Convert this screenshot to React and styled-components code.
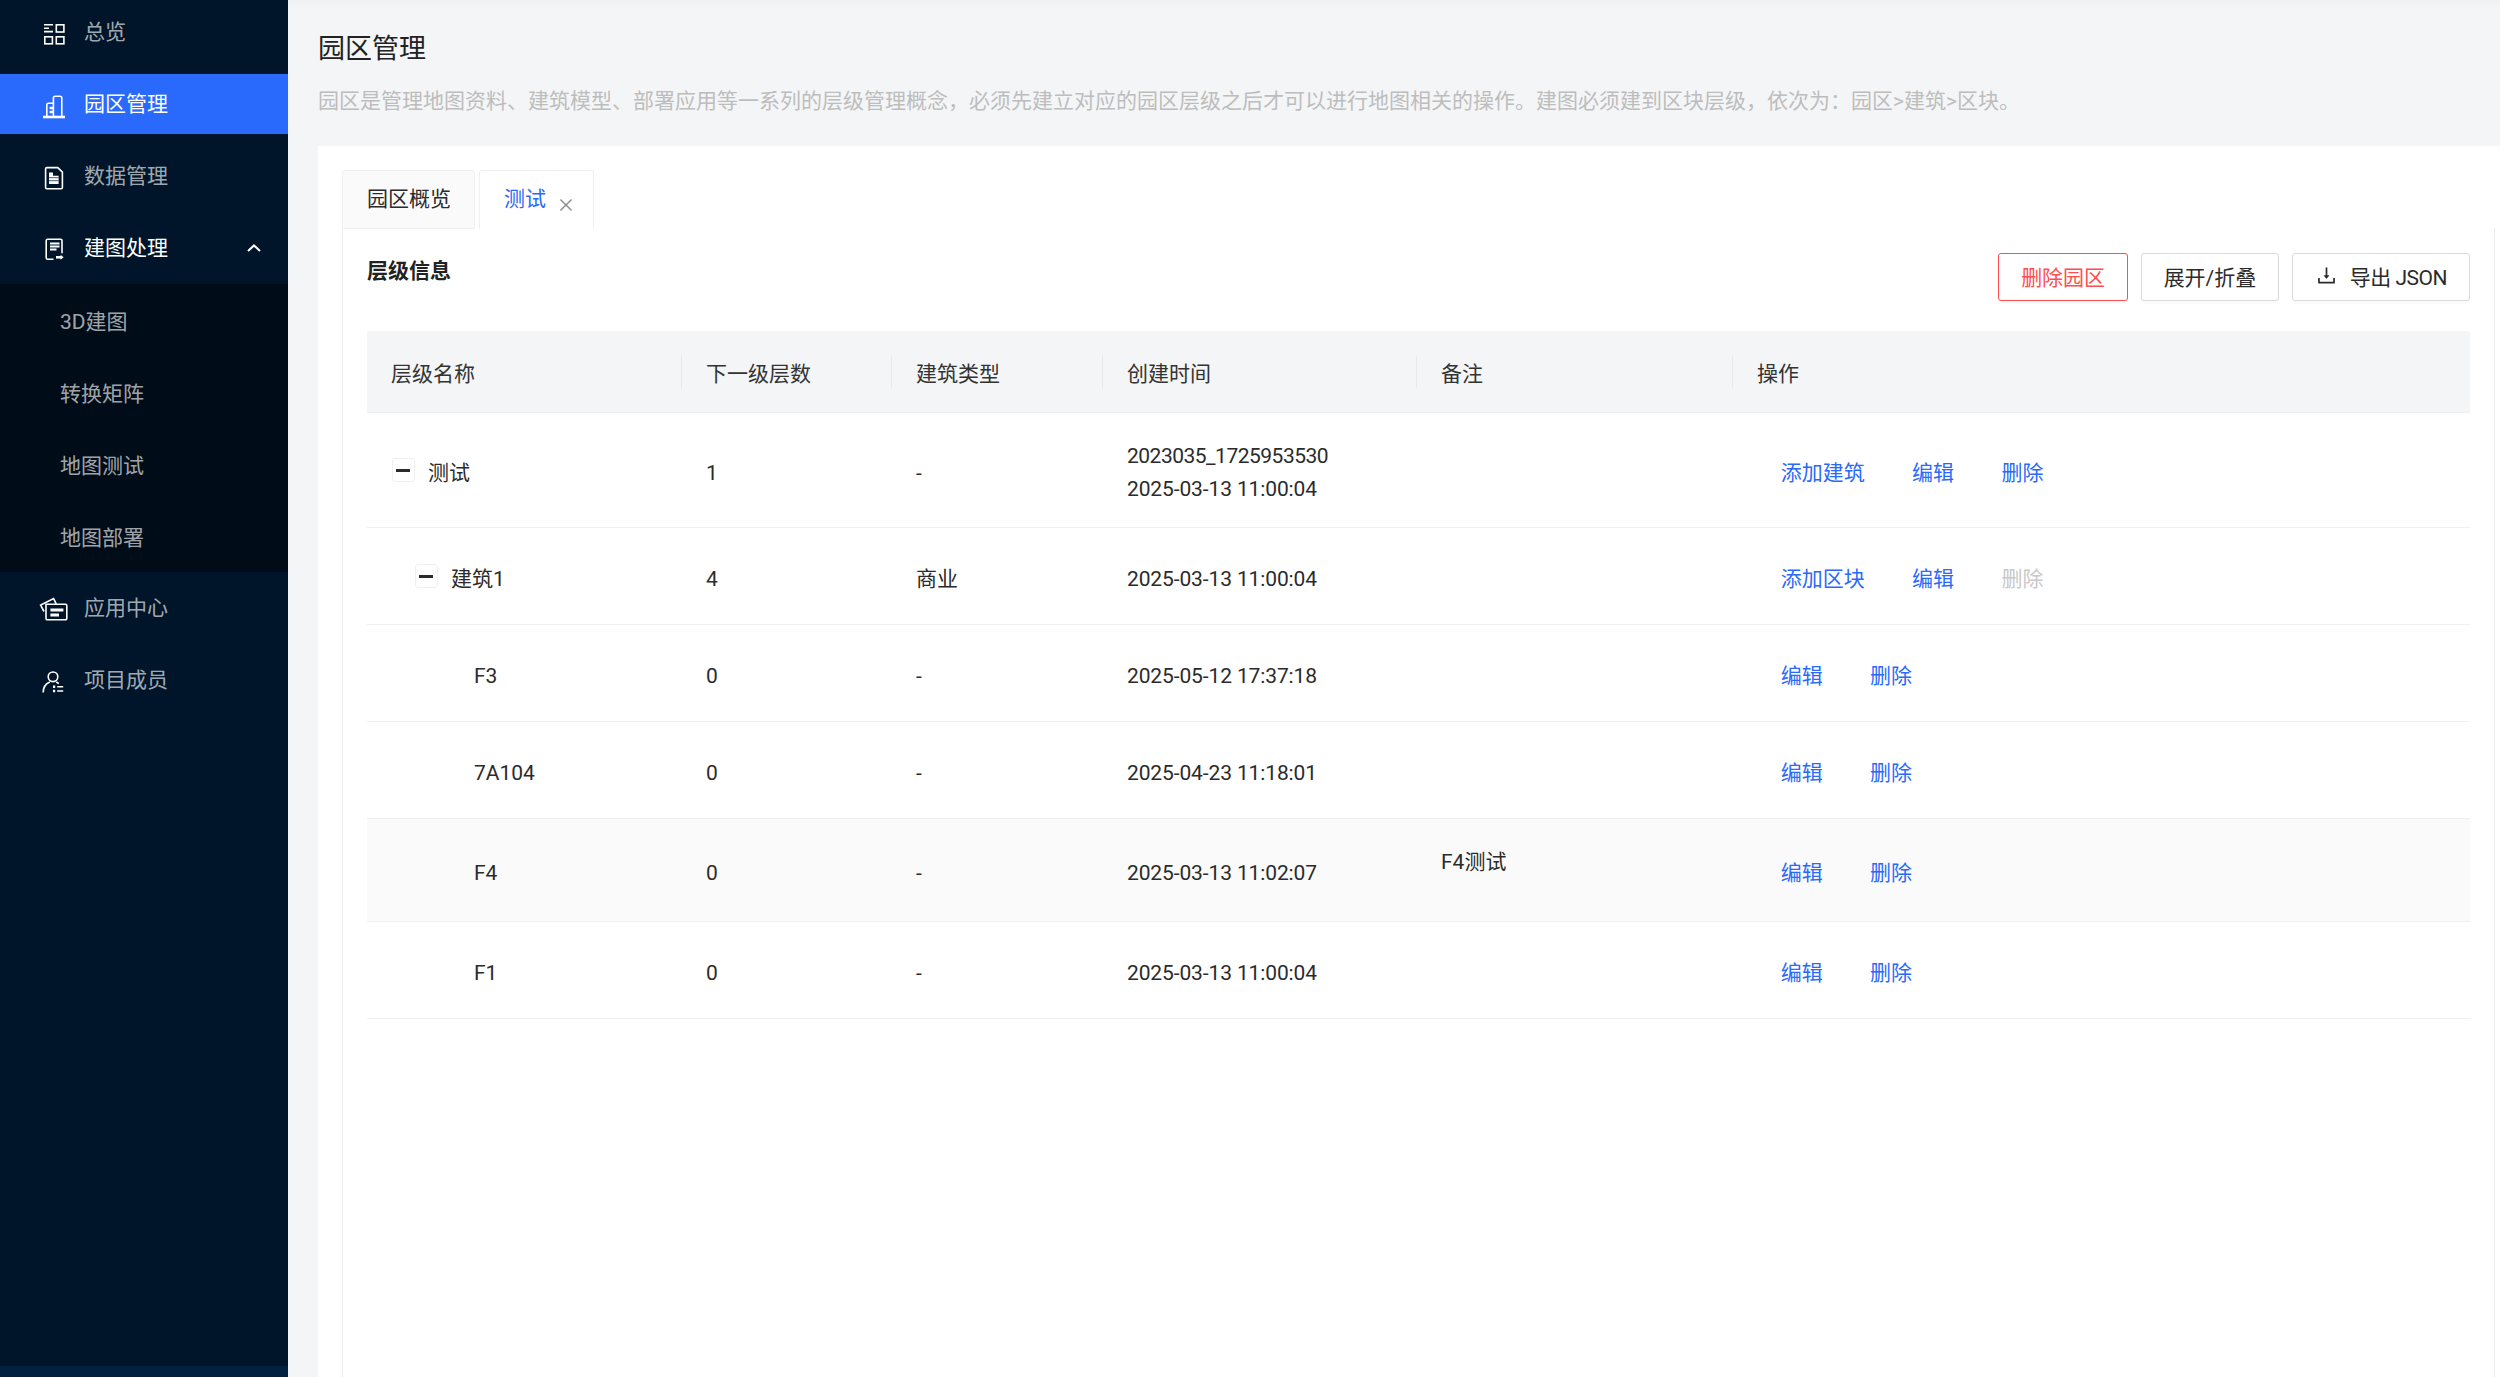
import React from 'react';
import styled, { createGlobalStyle } from 'styled-components';
import { AiOutlineDownload, AiOutlineClose } from 'react-icons/ai';

const GlobalStyle = createGlobalStyle`
  html, body {
    margin: 0;
    height: 100%;
    overflow: hidden;
  }
  body {
    font-family: Roboto, "Noto Sans CJK SC", sans-serif;
    font-size: 21px;
    line-height: 33px;
    color: #2b2b2b;
  }
  * {
    box-sizing: border-box;
  }
`;

const Layout = styled.div`
  display: flex;
  height: 1377px;
  overflow: hidden;
`;

const Sidebar = styled.aside`
  width: 288px;
  flex: none;
  display: flex;
  flex-direction: column;
  background: #001529;
`;

const Menu = styled.nav`
  flex: 1;
  display: flex;
  flex-direction: column;
  margin-top: -4px;
`;

const MenuItem = styled.div`
  height: 60px;
  margin: 6px 0;
  padding: 0 27px 0 42px;
  display: flex;
  align-items: center;
  gap: 18px;
  flex: none;
  color: ${(p) => (p.$active || p.$open ? '#fff' : 'rgba(255, 255, 255, 0.65)')};
  background: ${(p) => (p.$active ? '#2969fb' : 'transparent')};
`;

const MenuLabel = styled.span`
  flex: 1;
`;

const SubMenu = styled.div`
  background: #000c17;
  display: flex;
  flex-direction: column;
`;

const SubItem = styled.div`
  height: 60px;
  margin: 6px 0;
  padding: 4px 0 0 60px;
  display: flex;
  align-items: center;
  color: rgba(255, 255, 255, 0.65);
`;

const Trigger = styled.div`
  height: 11px;
  flex: none;
  background: #002140;
`;

const MenuIcon = styled.svg`
  width: 24px;
  height: 24px;
  flex: none;
  overflow: visible;
  fill: none;
  stroke: #fff;
  stroke-width: 1.6;
`;

const Main = styled.main`
  flex: 1;
  min-width: 0;
  display: flex;
  flex-direction: column;
  background: linear-gradient(#eff0f2, #f4f5f7 9px);
`;

const PageHead = styled.header`
  padding: 33px 30px 30px;
  height: 146px;
`;

const PageTitle = styled.h1`
  margin: 0;
  font-size: 27px;
  line-height: 33px;
  font-weight: 400;
  color: #222;
`;

const PageDesc = styled.p`
  margin: 19px 0 0;
  color: #bdbdbd;
  white-space: nowrap;
`;

const Panel = styled.section`
  flex: 1;
  min-height: 0;
  margin-left: 30px;
  padding: 24px 5px 0 24px;
  background: #fff;
  display: flex;
  flex-direction: column;
`;

const TabBar = styled.div`
  display: flex;
  gap: 4px;
  height: 59px;
  margin-bottom: -1px;
  position: relative;
  z-index: 1;
`;

const Tab = styled.div`
  height: 59px;
  padding: 8px ${(p) => (p.$active ? '18px' : '23px')} 0 24px;
  display: flex;
  align-items: flex-start;
  border: 1px solid #f0f0f0;
  border-bottom-color: ${(p) => (p.$active ? '#fff' : '#f0f0f0')};
  border-radius: 3px 3px 0 0;
  background: ${(p) => (p.$active ? '#fff' : '#fafafa')};
  color: ${(p) => (p.$active ? '#2969fb' : '#2b2b2b')};
  line-height: 41px;
`;

const TabClose = styled(AiOutlineClose)`
  width: 18px;
  height: 18px;
  margin: 17px 0 0 11px;
  color: #8c8c8c;
`;

const Card = styled.div`
  flex: 1;
  border-left: 1px solid #ececec;
  border-right: 1px solid #ececec;
  padding: 25px 24px 0 24px;
`;

const Toolbar = styled.div`
  display: flex;
  justify-content: space-between;
  align-items: flex-start;
  margin-bottom: 30px;
`;

const SectionTitle = styled.h2`
  margin: 0;
  padding-top: 2px;
  font-size: 21px;
  line-height: 33px;
  font-weight: 700;
  color: #222;
`;

const Actions = styled.div`
  display: flex;
  gap: 12.5px;
`;

const Button = styled.button`
  height: 48px;
  padding: 3px 22px 0;
  display: flex;
  align-items: center;
  gap: 12px;
  font: inherit;
  background: #fff;
  border: 1.5px solid ${(p) => (p.$danger ? '#ff4d4f' : '#d9d9d9')};
  border-radius: 3px;
  color: ${(p) => (p.$danger ? '#ff4d4f' : '#2b2b2b')};
  box-shadow: 0 3px 0 rgba(0, 0, 0, 0.015);
  white-space: nowrap;
`;

const ExportIcon = styled(AiOutlineDownload)`
  width: 23px;
  height: 23px;
  margin-top: -6px;
`;

const ExportLabel = styled.span`
  letter-spacing: -0.5px;
`;

const Table = styled.table`
  width: 2103px;
  table-layout: fixed;
  border-collapse: separate;
  border-spacing: 0;
`;

const Col = styled.col`
  width: ${(p) => p.$w}px;
`;

const Th = styled.th`
  height: 82px;
  padding: 5px 24px 0;
  position: relative;
  text-align: left;
  font-weight: 400;
  color: #333;
  background: #f4f5f7;
  border-bottom: 1px solid #f0f0f0;

  &:first-child {
    border-top-left-radius: 3px;
  }

  &:last-child {
    border-top-right-radius: 3px;
  }

  &:not(:last-child)::before {
    content: '';
    position: absolute;
    top: 50%;
    right: 0;
    width: 1.5px;
    height: 33px;
    transform: translateY(-50%);
    background: #e9eaec;
  }
`;

const Td = styled.td`
  padding: 27px 24px 21px;
  vertical-align: middle;
  border-bottom: 1.5px solid #f0f0f0;
  background: ${(p) => (p.$hover ? '#fafafa' : '#fff')};
`;

const NameCell = styled.div`
  display: flex;
  align-items: center;
  gap: 13px;
  padding-left: ${(p) => p.$level * 23}px;
`;

const ExpandBox = styled.span`
  width: 23.5px;
  height: 23.5px;
  margin: 0 0 6px 0.5px;
  flex: none;
  display: flex;
  align-items: center;
  justify-content: center;
  border: 1px solid #f0f0f0;
  border-radius: 3px;
  background: #fff;

  &::after {
    content: '';
    width: 14px;
    height: 3px;
    background: #2b2b2b;
  }
`;

const ExpandSpace = styled.span`
  width: 24px;
  flex: none;
`;

const DateLine = styled.div`
  white-space: nowrap;
  letter-spacing: ${(p) => (p.$id ? '-0.5px' : '-0.12px')};
`;

const Note = styled.pre`
  margin: 0 0 21px;
  font: inherit;
`;

const OpCell = styled.div`
  display: flex;
`;

const LinkButton = styled.span`
  height: 48px;
  padding: 0 23.7px;
  display: flex;
  align-items: center;
  white-space: nowrap;
  color: ${(p) => (p.$disabled ? '#c8c8c8' : '#2969fb')};
`;

const ChevronIcon = styled.svg`
  width: 14px;
  height: 8px;
  fill: none;
  stroke: #fff;
  stroke-width: 2;
`;

const IconOverview = () => (
  <MenuIcon viewBox="0 0 24 24">
    <path d="M2 4.8h9M2 8.2h5M2 11.6h9" />
    <rect x="14.3" y="4.8" width="7.6" height="7.2" />
    <rect x="2.8" y="16.8" width="7.6" height="7" />
    <rect x="14.3" y="16.8" width="7.6" height="7" />
  </MenuIcon>
);

const IconPark = () => (
  <MenuIcon viewBox="0 0 24 24">
    <path d="M4.8 24V12.8q0-1.6 1.6-1.6h5V6q0-1.8 1.8-1.8h4.8q1.8 0 1.8 1.8v18" />
    <path d="M11.4 11.2V24" />
    <path d="M1 25h22" strokeWidth="2.6" />
    <path d="M7.6 16h4.4M7.6 20h4.4" strokeWidth="2.4" />
  </MenuIcon>
);

const IconData = () => (
  <MenuIcon viewBox="0 0 24 24">
    <path d="M4.8 3.6h11l4.6 4.6v15.4q0 1.2-1.2 1.2H4.8q-1.2 0-1.2-1.2V4.8q0-1.2 1.2-1.2z" />
    <path d="M7 8.5h4v3.2h5.6V20H7z" fill="#fff" stroke="none" />
    <path d="M7 13.7h9.6M7 16.7h9.6" stroke="#001529" strokeWidth="0.7" />
  </MenuIcon>
);

const IconBuild = () => (
  <MenuIcon viewBox="0 0 24 24">
    <path d="M11.5 23.2H5.6q-1.4 0-1.4-1.4V4.6q0-1.4 1.4-1.4h13q1.4 0 1.4 1.4v12.6" />
    <path d="M8 7.5h9.5M8 10.5h9.5M8 13.5h6.5" strokeWidth="2" />
    <path d="M14 21.3h5.5" strokeWidth="2.6" />
    <path d="M18.6 18.8l3 2.5-3 2.5z" fill="#fff" stroke="none" />
  </MenuIcon>
);

const IconApp = () => (
  <MenuIcon viewBox="0 0 24 24">
    <path d="M2 15.5l-3.4-6.4L11.6 2.6l2.6 5.2" />
    <path d="M4.6 8.2h18.8q1.4 0 1.4 1.4v12.8q0 1.4-1.4 1.4H5.4q-1.4 0-1.4-1.4V8.2z" />
    <path d="M8.4 14h13M8.4 19h8.6" strokeWidth="2.8" />
  </MenuIcon>
);

const IconMember = () => (
  <MenuIcon viewBox="0 0 24 24">
    <circle cx="11" cy="8.8" r="4.8" />
    <path d="M1.2 24.4q0-7.6 6.6-10.4M14.2 14q1.4.6 2.6 1.6" />
    <path d="M11 18.8h2.2M11 23h2.2" strokeWidth="2.4" />
    <path d="M15.2 18.8h6M15.2 23h6" strokeWidth="1.6" />
  </MenuIcon>
);

const menuTop = [
  { label: '总览', icon: <IconOverview /> },
  { label: '园区管理', icon: <IconPark />, active: true },
  { label: '数据管理', icon: <IconData /> },
];

const subItems = ['3D建图', '转换矩阵', '地图测试', '地图部署'];

const menuBottom = [
  { label: '应用中心', icon: <IconApp /> },
  { label: '项目成员', icon: <IconMember /> },
];

const columns = [
  { title: '层级名称', w: 315 },
  { title: '下一级层数', w: 210 },
  { title: '建筑类型', w: 211 },
  { title: '创建时间', w: 314 },
  { title: '备注', w: 316 },
  { title: '操作', w: 737 },
];

const rows = [
  {
    name: '测试',
    level: 0,
    expand: true,
    count: '1',
    type: '-',
    id: '2023035_1725953530',
    date: '2025-03-13 11:00:04',
    ops: [{ t: '添加建筑' }, { t: '编辑' }, { t: '删除' }],
  },
  {
    name: '建筑1',
    level: 1,
    expand: true,
    count: '4',
    type: '商业',
    date: '2025-03-13 11:00:04',
    ops: [{ t: '添加区块' }, { t: '编辑' }, { t: '删除', disabled: true }],
  },
  { name: 'F3', level: 2, count: '0', type: '-', date: '2025-05-12 17:37:18', ops: [{ t: '编辑' }, { t: '删除' }] },
  { name: '7A104', level: 2, count: '0', type: '-', date: '2025-04-23 11:18:01', ops: [{ t: '编辑' }, { t: '删除' }] },
  {
    name: 'F4',
    level: 2,
    count: '0',
    type: '-',
    date: '2025-03-13 11:02:07',
    note: 'F4测试',
    hover: true,
    ops: [{ t: '编辑' }, { t: '删除' }],
  },
  { name: 'F1', level: 2, count: '0', type: '-', date: '2025-03-13 11:00:04', ops: [{ t: '编辑' }, { t: '删除' }] },
];

const App = () => {
  return (
    <Layout>
      <GlobalStyle />
      <Sidebar>
        <Menu>
          {menuTop.map((m) => (
            <MenuItem key={m.label} $active={m.active}>
              {m.icon}
              <MenuLabel>{m.label}</MenuLabel>
            </MenuItem>
          ))}
          <MenuItem $open>
            <IconBuild />
            <MenuLabel>建图处理</MenuLabel>
            <ChevronIcon viewBox="0 0 14 8">
              <path d="M1 7l6-5.6L13 7" />
            </ChevronIcon>
          </MenuItem>
          <SubMenu>
            {subItems.map((s) => (
              <SubItem key={s}>{s}</SubItem>
            ))}
          </SubMenu>
          {menuBottom.map((m) => (
            <MenuItem key={m.label}>
              {m.icon}
              <MenuLabel>{m.label}</MenuLabel>
            </MenuItem>
          ))}
        </Menu>
        <Trigger />
      </Sidebar>

      <Main>
        <PageHead>
          <PageTitle>园区管理</PageTitle>
          <PageDesc>
            园区是管理地图资料、建筑模型、部署应用等一系列的层级管理概念，必须先建立对应的园区层级之后才可以进行地图相关的操作。建图必须建到区块层级，依次为：园区&gt;建筑&gt;区块。
          </PageDesc>
        </PageHead>

        <Panel>
          <TabBar>
            <Tab>园区概览</Tab>
            <Tab $active>
              测试
              <TabClose />
            </Tab>
          </TabBar>
          <Card>
            <Toolbar>
              <SectionTitle>层级信息</SectionTitle>
              <Actions>
                <Button $danger>删除园区</Button>
                <Button>展开/折叠</Button>
                <Button>
                  <ExportIcon />
                  <ExportLabel>导出 JSON</ExportLabel>
                </Button>
              </Actions>
            </Toolbar>
            <Table>
              <colgroup>
                {columns.map((c) => (
                  <Col key={c.title} $w={c.w} />
                ))}
              </colgroup>
              <thead>
                <tr>
                  {columns.map((c) => (
                    <Th key={c.title}>{c.title}</Th>
                  ))}
                </tr>
              </thead>
              <tbody>
                {rows.map((r) => (
                  <tr key={r.name}>
                    <Td $hover={r.hover}>
                      <NameCell $level={r.level}>
                        {r.expand ? <ExpandBox /> : <ExpandSpace />}
                        {r.name}
                      </NameCell>
                    </Td>
                    <Td $hover={r.hover}>{r.count}</Td>
                    <Td $hover={r.hover}>{r.type}</Td>
                    <Td $hover={r.hover}>
                      {r.id && <DateLine $id>{r.id}</DateLine>}
                      <DateLine>{r.date}</DateLine>
                    </Td>
                    <Td $hover={r.hover}>{r.note && <Note>{r.note}</Note>}</Td>
                    <Td $hover={r.hover}>
                      <OpCell>
                        {r.ops.map((o) => (
                          <LinkButton key={o.t} $disabled={o.disabled}>
                            {o.t}
                          </LinkButton>
                        ))}
                      </OpCell>
                    </Td>
                  </tr>
                ))}
              </tbody>
            </Table>
          </Card>
        </Panel>
      </Main>
    </Layout>
  );
};

export default App;
